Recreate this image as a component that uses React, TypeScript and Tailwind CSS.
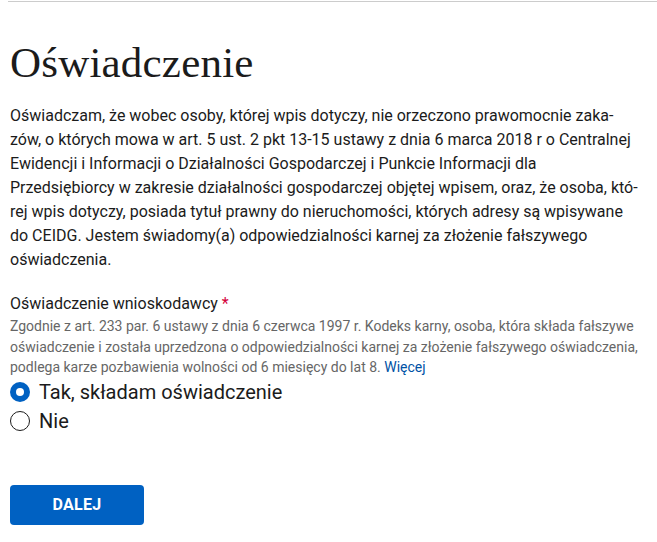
export default function App() {
  return (
    <div className="min-h-screen bg-white text-[#1b1b1b]" style={{ fontFamily: 'Roboto, "Noto Sans", sans-serif' }}>
      <div className="ml-2 h-px bg-[#cccccc] mt-px" />
      <main className="px-[10px]">
        <h1 className="mt-[37px] text-[43px] leading-[48px] text-[#1b1b1b] tracking-[0.2px]" style={{ fontFamily: '"Liberation Serif", serif' }}>
          Oświadczenie
        </h1>

        <p className="mt-[17px] text-base leading-6 whitespace-nowrap">
          Oświadczam, że wobec osoby, której wpis dotyczy, nie orzeczono prawomocnie zaka-
          <br />
          zów, o których mowa w art. 5 ust. 2 pkt 13-15 ustawy z dnia 6 marca 2018 r o Centralnej
          <br />
          Ewidencji i Informacji o Działalności Gospodarczej i Punkcie Informacji dla
          <br />
          Przedsiębiorcy w zakresie działalności gospodarczej objętej wpisem, oraz, że osoba, któ-
          <br />
          rej wpis dotyczy, posiada tytuł prawny do nieruchomości, których adresy są wpisywane
          <br />
          do CEIDG. Jestem świadomy(a) odpowiedzialności karnej za złożenie fałszywego
          <br />
          oświadczenia.
        </p>

        <fieldset className="mt-[20px]">
          <legend className="text-base leading-6">
            Oświadczenie wnioskodawcy<span className="text-[#d4003a] ml-1">*</span>
          </legend>
          <p className="text-sm leading-[20.5px] text-[#666666] whitespace-nowrap">
            Zgodnie z art. 233 par. 6 ustawy z dnia 6 czerwca 1997 r. Kodeks karny, osoba, która składa fałszywe
            <br />
            oświadczenie i została uprzedzona o odpowiedzialności karnej za złożenie fałszywego oświadczenia,
            <br />
            podlega karze pozbawienia wolności od 6 miesięcy do lat 8.{' '}
            <a href="#" className="text-[#0052a5]">Więcej</a>
          </p>

          <div className="flex flex-col">
            <label className="flex items-center gap-[9px] h-[29px]">
              <span className="w-5 h-5 rounded-full bg-[#0061c2] flex items-center justify-center">
                <span className="w-2 h-2 rounded-full bg-white" />
              </span>
              <span className="text-[20px] leading-6">Tak, składam oświadczenie</span>
            </label>
            <label className="flex items-center gap-[9px] h-[29px]">
              <span className="w-5 h-5 rounded-full border-[1.5px] border-[#1b1b1b] bg-white" />
              <span className="text-[20px] leading-6">Nie</span>
            </label>
          </div>
        </fieldset>

        <button className="mt-[49px] w-[134px] h-10 rounded bg-[#0061c2] text-white font-bold text-base tracking-[0.3px]">
          DALEJ
        </button>
      </main>
    </div>
  )
}
